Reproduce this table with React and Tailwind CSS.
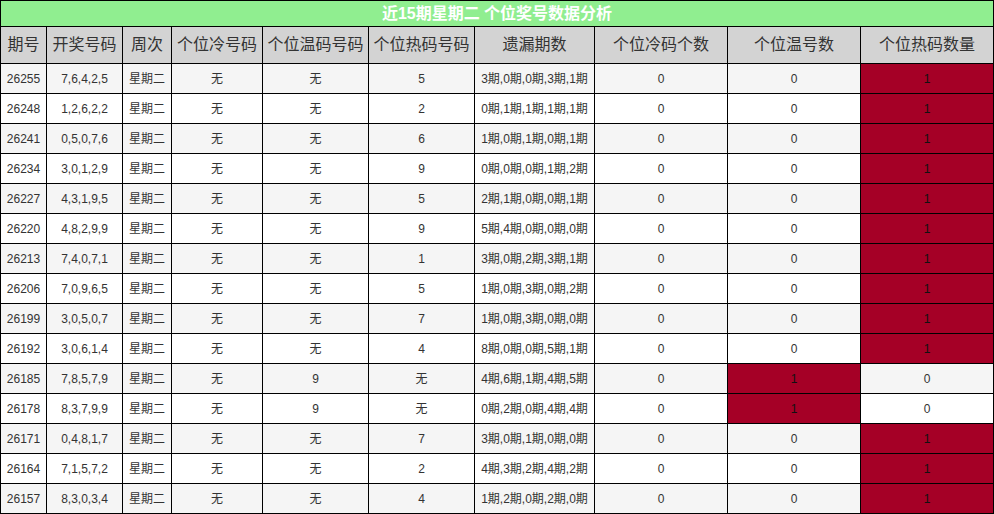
import React from "react";

const rows = [
  ["26255", "7,6,4,2,5", "无", "无", "5", "3期,0期,0期,3期,1期", "0", "0", "1"],
  ["26248", "1,2,6,2,2", "无", "无", "2", "0期,1期,1期,1期,1期", "0", "0", "1"],
  ["26241", "0,5,0,7,6", "无", "无", "6", "1期,0期,1期,0期,1期", "0", "0", "1"],
  ["26234", "3,0,1,2,9", "无", "无", "9", "0期,0期,0期,1期,2期", "0", "0", "1"],
  ["26227", "4,3,1,9,5", "无", "无", "5", "2期,1期,0期,0期,1期", "0", "0", "1"],
  ["26220", "4,8,2,9,9", "无", "无", "9", "5期,4期,0期,0期,0期", "0", "0", "1"],
  ["26213", "7,4,0,7,1", "无", "无", "1", "3期,0期,2期,3期,1期", "0", "0", "1"],
  ["26206", "7,0,9,6,5", "无", "无", "5", "1期,0期,3期,0期,2期", "0", "0", "1"],
  ["26199", "3,0,5,0,7", "无", "无", "7", "1期,0期,3期,0期,0期", "0", "0", "1"],
  ["26192", "3,0,6,1,4", "无", "无", "4", "8期,0期,0期,5期,1期", "0", "0", "1"],
  ["26185", "7,8,5,7,9", "无", "9", "无", "4期,6期,1期,4期,5期", "0", "1", "0"],
  ["26178", "8,3,7,9,9", "无", "9", "无", "0期,2期,0期,4期,4期", "0", "1", "0"],
  ["26171", "0,4,8,1,7", "无", "无", "7", "3期,0期,1期,0期,0期", "0", "0", "1"],
  ["26164", "7,1,5,7,2", "无", "无", "2", "4期,3期,2期,4期,2期", "0", "0", "1"],
  ["26157", "8,3,0,3,4", "无", "无", "4", "1期,2期,0期,2期,0期", "0", "0", "1"],
].map((r) => [r[0], r[1], "星期二", ...r.slice(2)]);

const headers = ["期号", "开奖号码", "周次", "个位冷号码", "个位温码号码", "个位热码号码", "遗漏期数", "个位冷码个数", "个位温号数", "个位热码数量"];

const grid = "grid grid-cols-[46px_76px_49px_91px_106px_106px_120px_133px_133px_133px]";

export default function App() {
  return (
    <div
      className="w-[994px] h-[514px] bg-white border-l border-t border-black text-[#333]"
      style={{ fontFamily: '"Liberation Sans", "Noto Sans CJK SC", sans-serif' }}
    >
      <div className="h-[26px] bg-[#90ee90] border-r border-b border-black flex items-center justify-center text-white font-bold text-[16px]">
        近15期星期二 个位奖号数据分析
      </div>
      <div className={grid}>
        {headers.map((h) => (
          <div key={h} className="h-[37px] bg-[#d3d3d3] border-r border-b border-black flex items-center justify-center text-[16px] whitespace-nowrap">
            {h}
          </div>
        ))}
      </div>
      {rows.map((r, i) => (
        <div key={r[0]} className={grid}>
          {r.map((c, j) => {
            const red = (j === 8 || j === 9) && c === "1";
            const bg = red ? "bg-[#a50026] text-[#111]" : i % 2 === 0 ? "bg-[#f5f5f5]" : "bg-white";
            return (
              <div key={j} className={`h-[30px] border-r border-b border-black flex items-center justify-center text-[12px] whitespace-nowrap ${bg}`}>
                {c}
              </div>
            );
          })}
        </div>
      ))}
    </div>
  );
}
